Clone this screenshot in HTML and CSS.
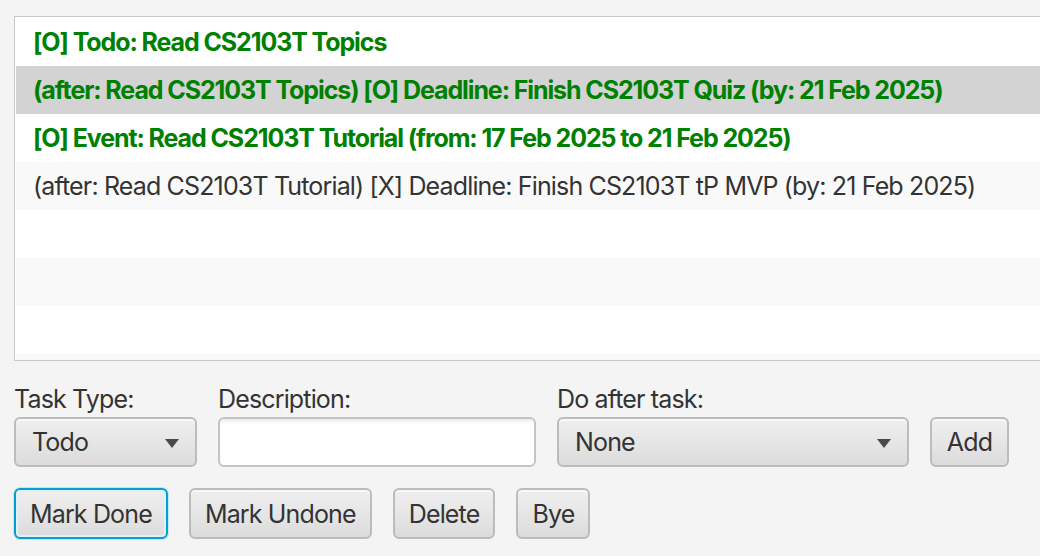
FILE: index.html
```html
<!DOCTYPE html>
<html lang="en">
<head>
<meta charset="utf-8">
<title>Tasks</title>
<link rel="stylesheet" href="styles.css">
</head>
<body>
<div class="app">
  <div class="list">
    <div class="row done">[O] Todo: Read CS2103T Topics</div>
    <div class="row done selected">(after: Read CS2103T Topics) [O] Deadline: Finish CS2103T Quiz (by: 21 Feb 2025)</div>
    <div class="row done">[O] Event: Read CS2103T Tutorial (from: 17 Feb 2025 to 21 Feb 2025)</div>
    <div class="row alt">(after: Read CS2103T Tutorial) [X] Deadline: Finish CS2103T tP MVP (by: 21 Feb 2025)</div>
    <div class="row"></div>
    <div class="row alt"></div>
    <div class="row"></div>
    <div class="row alt"></div>
  </div>

  <div class="form">
    <div class="field f-type">
      <div class="label">Task Type:</div>
      <div class="combo"><span>Todo</span><span class="arrow"></span></div>
    </div>
    <div class="field f-desc">
      <div class="label">Description:</div>
      <div class="textbox"></div>
    </div>
    <div class="field f-after">
      <div class="label">Do after task:</div>
      <div class="combo"><span>None</span><span class="arrow"></span></div>
    </div>
    <div class="field f-add">
      <button class="btn">Add</button>
    </div>
  </div>

  <div class="actions">
    <button class="btn focused">Mark Done</button>
    <button class="btn">Mark Undone</button>
    <button class="btn">Delete</button>
    <button class="btn">Bye</button>
  </div>
</div>
</body>
</html>
```

FILE: styles.css
```css
html, body {
  margin: 0;
  padding: 0;
  background: #f4f4f4;
  overflow: hidden;
}
body {
  width: 1040px;
  height: 556px;
  font-family: "Inter", "Noto Sans", sans-serif;
  font-size: 25px;
  color: #333333;
}
.app {
  padding: 16px 0 0 14px;
}
.list {
  width: 1100px;
  height: 345px;
  box-sizing: border-box;
  border: 1px solid #c8c8c8;
  background: #ffffff;
  padding: 1px;
  overflow: hidden;
}
.row {
  height: 48px;
  line-height: 48px;
  padding-left: 17px;
  white-space: nowrap;
  background: #ffffff;
  color: #333333;
  letter-spacing: -0.85px;
}
.row.alt { background: #f9f9f9; }
.row.selected { background: #d3d3d3; }
.row.done {
  color: #008000;
  font-weight: 700;
  letter-spacing: -1.1px;
}
.form {
  display: flex;
  align-items: flex-end;
  gap: 21px;
  margin-top: 23px;
}
.field {
  display: flex;
  flex-direction: column;
}
.f-type { width: 183px; }
.f-desc { width: 318px; }
.f-after { width: 352px; }
.label {
  line-height: 30px;
  margin-bottom: 3px;
  letter-spacing: -0.85px;
}
.combo, .btn {
  box-sizing: border-box;
  height: 50px;
  border: 2px solid #bcbcbc;
  border-radius: 6px;
  background: linear-gradient(to bottom, #efefef 0%, #e4e4e4 60%, #dbdbdb 100%);
  box-shadow: inset 0 2px 0 rgba(255,255,255,0.55);
  font-family: inherit;
  font-size: 25px;
  color: #333333;
  letter-spacing: -0.85px;
}
.combo {
  display: flex;
  align-items: center;
  justify-content: space-between;
  padding: 0 16px 0 16px;
}
.arrow {
  width: 0;
  height: 0;
  border-left: 7px solid transparent;
  border-right: 7px solid transparent;
  border-top: 9px solid #4a4a4a;
  margin-top: 2px;
}
.textbox {
  box-sizing: border-box;
  height: 50px;
  border: 2px solid #c4c4c4;
  border-radius: 6px;
  background: linear-gradient(to bottom, #ececec 0px, #ffffff 5px, #ffffff 100%);
}
.btn {
  padding: 0 14px;
  margin: 0;
  cursor: default;
}
.f-add .btn { width: 79px; padding: 0; }
.actions {
  display: flex;
  gap: 21px;
  margin-top: 21px;
}
.actions .btn { height: 51px; }
.btn.focused {
  border-color: #039ed3;
  box-shadow: 0 0 0 1px rgba(3,158,211,0.18), inset 0 0 0 2px #dff0f6;
}
```
